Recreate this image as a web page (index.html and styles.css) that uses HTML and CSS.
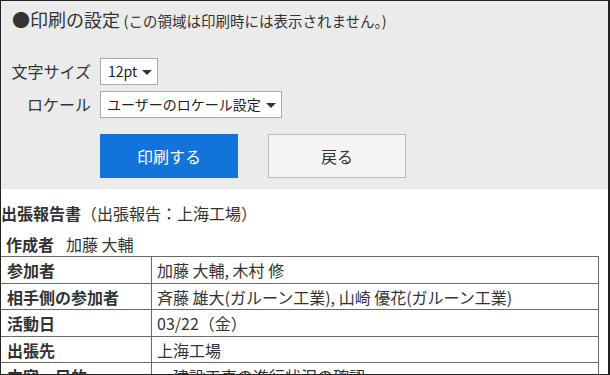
FILE: index.html
```html
<!DOCTYPE html>
<html lang="ja">
<head>
    <meta charset="UTF-8">
    <title>印刷</title>
    <link rel="stylesheet" href="styles.css">
</head>
<body>
    <div class="page">
        <!-- Print settings (not printed) -->
        <div class="print-settings">
            <div class="settings-title">
                <span class="title-main">●印刷の設定</span>
                <span class="title-note">(この領域は印刷時には表示されません。)</span>
            </div>
            <div class="settings-form">
                <label for="font-size">文字サイズ</label>
                <span class="select-wrap">
                    <select id="font-size" class="size-select">
                        <option>12pt</option>
                    </select>
                </span>
                <label for="locale">ロケール</label>
                <span class="select-wrap">
                    <select id="locale" class="locale-select">
                        <option>ユーザーのロケール設定</option>
                    </select>
                </span>
            </div>
            <div class="settings-buttons">
                <button type="button" class="btn-print">印刷する</button>
                <button type="button" class="btn-back">戻る</button>
            </div>
        </div>

        <!-- Report -->
        <div class="report">
            <div class="report-title"><b>出張報告書</b>（出張報告：上海工場）</div>
            <div class="report-author"><b>作成者</b><span>加藤 大輔</span></div>
            <table class="report-table">
                <tr>
                    <th>参加者</th>
                    <td>加藤 大輔, 木村 修</td>
                </tr>
                <tr>
                    <th>相手側の参加者</th>
                    <td>斉藤 雄大(ガルーン工業), 山崎 優花(ガルーン工業)</td>
                </tr>
                <tr>
                    <th>活動日</th>
                    <td>03/22（金）</td>
                </tr>
                <tr>
                    <th>出張先</th>
                    <td>上海工場</td>
                </tr>
                <tr>
                    <th>内容・目的</th>
                    <td>・建設工事の進行状況の確認</td>
                </tr>
            </table>
        </div>
    </div>
</body>
</html>
```

FILE: styles.css
```css
* {
    margin: 0;
    padding: 0;
    box-sizing: border-box;
}
body {
    font-family: "Noto Sans CJK JP", "Noto Sans", sans-serif;
    color: #333;
    background: #fff;
}
.page {
    width: 610px;
    height: 375px;
    border: 1px solid #222;
    border-right-width: 2px;
    overflow: hidden;
}

/* Print settings */
.print-settings {
    background-color: #ebebeb;
    padding: 6px 0 11px 0;
}
.settings-title {
    padding-left: 11px;
    line-height: 24px;
    white-space: nowrap;
}
.title-main {
    font-size: 18px;
}
.title-note {
    font-size: 14.5px;
}
.settings-form {
    display: grid;
    grid-template-columns: 90px auto;
    column-gap: 9px;
    row-gap: 6px;
    align-items: center;
    justify-content: start;
    justify-items: start;
    margin-top: 25px;
}
.settings-form label {
    justify-self: end;
    font-size: 16px;
    line-height: 27px;
}
.select-wrap {
    position: relative;
    display: inline-block;
    height: 27px;
}
.select-wrap::after {
    content: "";
    position: absolute;
    right: 6px;
    top: 12px;
    border-left: 5px solid transparent;
    border-right: 5px solid transparent;
    border-top: 5px solid #333;
    pointer-events: none;
}
select {
    appearance: none;
    -webkit-appearance: none;
    display: block;
    font-family: inherit;
    font-size: 14px;
    color: #222;
    height: 27px;
    line-height: 25px;
    padding: 0 20px 0 7px;
    border: 1px solid #aaa;
    border-radius: 0;
    background: #fff;
}
.size-select {
    width: 58px;
}
.locale-select {
    width: 182px;
    padding-left: 6px;
}
.settings-buttons {
    display: flex;
    gap: 30px;
    margin-top: 16px;
    padding-left: 99px;
}
.settings-buttons button {
    width: 138px;
    height: 44px;
    font-family: inherit;
    font-size: 16px;
    cursor: pointer;
}
.btn-print {
    background-color: #1274da;
    color: white;
    border: none;
}
.btn-back {
    background-color: #f5f5f5;
    color: #333;
    border: 1px solid #bbb;
}

/* Report */
.report {
    padding: 12px 9px 0 0;
    font-size: 16px;
}
.report-title {
    line-height: 24px;
    white-space: nowrap;
}
.report-author {
    margin-top: 7px;
    padding-left: 5px;
    line-height: 24px;
}
.report-author span {
    margin-left: 12px;
}
.report-table {
    border-collapse: collapse;
    margin-left: -1px;
    width: calc(100% + 1px);
}
.report-table th,
.report-table td {
    border: 1px solid #6b6b6b;
    text-align: left;
    line-height: 22px;
    padding: 2px 4px 1.5px 5px;
    white-space: nowrap;
}
.report-table th {
    width: 151px;
    padding-left: 6px;
    font-weight: bold;
}
```
